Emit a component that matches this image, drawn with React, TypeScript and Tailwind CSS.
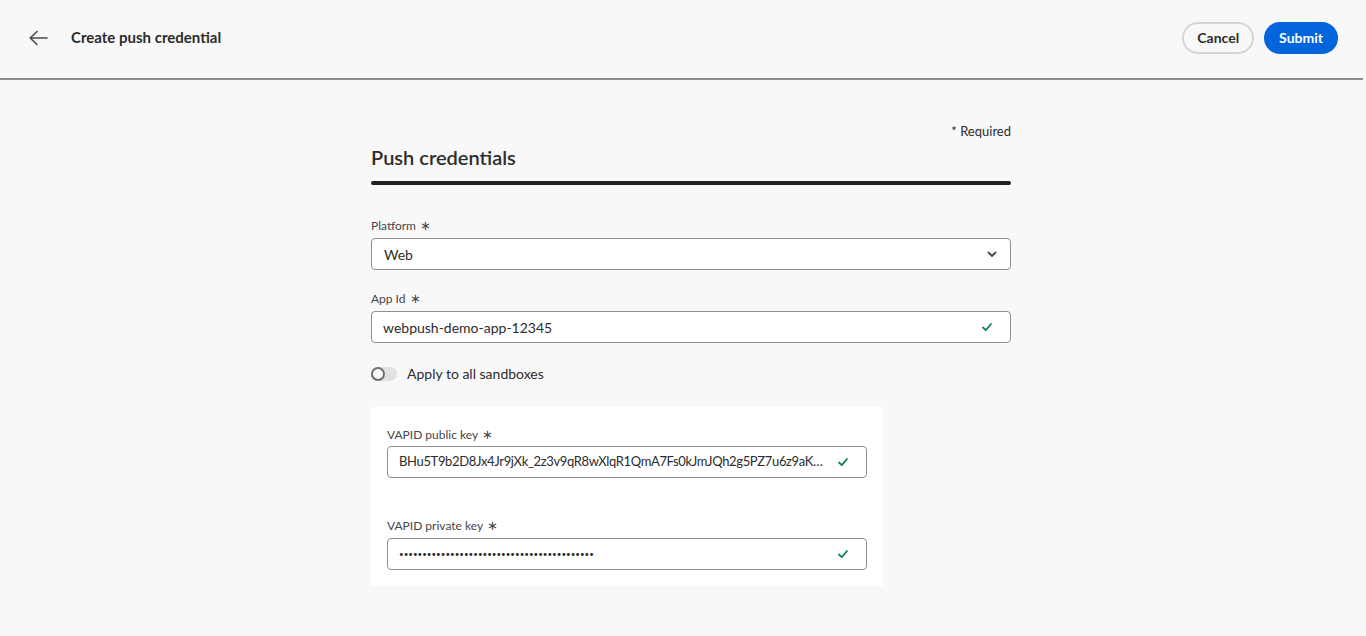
import React from "react";

const font = { fontFamily: "Lato, 'Noto Sans', sans-serif" };

function Check() {
  return (
    <svg width="12" height="12" viewBox="0 0 12 12" className="shrink-0">
      <path d="M2 6.5 L4.8 9.2 L10 3" fill="none" stroke="#12805c" strokeWidth="1.8" strokeLinecap="round" strokeLinejoin="round" />
    </svg>
  );
}

function Label({ children, mb = "mb-[5px]" }: { children: React.ReactNode; mb?: string }) {
  return (
    <div className={`text-[12px] text-[#464646] leading-[15px] ${mb} flex items-center gap-[4px]`}>
      <span>{children}</span>
      <span className="text-[13px] leading-none">∗</span>
    </div>
  );
}

export default function App() {
  return (
    <div className="min-h-[636px] w-full bg-[#f8f8f8] text-[#222]" style={font}>
      <header className="h-[80px] flex items-center justify-between pl-[28px] pr-[25px] border-b-2 border-[#909090] mr-[3px]">
        <div className="flex items-center gap-[23px] pb-[3px]">
          <svg width="20" height="16" viewBox="0 0 20 16">
            <path d="M9 1.5 L2.2 8 L9 14.5 M2.5 8 H19" fill="none" stroke="#4b4b4b" strokeWidth="1.6" strokeLinecap="round" strokeLinejoin="round" />
          </svg>
          <h1 className="text-[15px] font-bold text-[#2c2c2c]">Create push credential</h1>
        </div>
        <div className="flex items-center gap-[10px] pb-[3px]">
          <button className="h-[32px] px-[13px] rounded-full border-2 border-[#d5d5d5] text-[14px] font-bold text-[#2c2c2c]">Cancel</button>
          <button className="h-[32px] px-[15px] rounded-full bg-[#0265dc] text-[14px] font-bold text-white">Submit</button>
        </div>
      </header>

      <main className="flex justify-center pt-[43px]">
        <div className="w-[640px] ml-[16px]">
          <div className="text-right text-[13px] text-[#2c2c2c] leading-[16px]">* Required</div>
          <h2 className="text-[20px] font-semibold text-[#2c2c2c] mt-[7px] leading-[22px]">Push credentials</h2>
          <div className="h-[4px] bg-[#222] rounded-full mt-[13px]" />

          <div className="mt-[33px]">
            <Label>Platform</Label>
            <div className="h-[32px] bg-white border border-[#8f8f8f] rounded-[4px] flex items-center justify-between pl-[12px] pr-[12px]">
              <span className="text-[14px] text-[#2c2c2c]">Web</span>
              <svg width="12" height="12" viewBox="0 0 12 12">
                <path d="M2.5 4.5 L6 8 L9.5 4.5" fill="none" stroke="#4b4b4b" strokeWidth="1.8" strokeLinecap="round" strokeLinejoin="round" />
              </svg>
            </div>
          </div>

          <div className="mt-[21px]">
            <Label>App Id</Label>
            <div className="h-[32px] bg-white border border-[#8f8f8f] rounded-[4px] flex items-center justify-between pl-[11px] pr-[17px]">
              <span className="text-[14px] text-[#2c2c2c]">webpush-demo-app-12345</span>
              <Check />
            </div>
          </div>

          <div className="mt-[20px] flex items-center gap-[10px]">
            <div className="w-[26px] h-[14px] rounded-full bg-[#e1e1e1] relative">
              <div className="absolute left-0 top-0 w-[14px] h-[14px] rounded-full bg-white border-2 border-[#6e6e6e]" />
            </div>
            <span className="text-[14px] text-[#2c2c2c]">Apply to all sandboxes</span>
          </div>

          <div className="mt-[23px] w-[512px] bg-white px-[16px] pt-[20px] pb-[16px]">
            <Label mb="mb-[4px]">VAPID public key</Label>
            <div className="h-[32px] bg-white border border-[#8f8f8f] rounded-[4px] flex items-center justify-between pl-[11px] pr-[17px]">
              <span className="text-[13px] tracking-[-0.35px] text-[#2c2c2c] whitespace-nowrap overflow-hidden pr-[8px]">BHu5T9b2D8Jx4Jr9jXk_2z3v9qR8wXlqR1QmA7Fs0kJmJQh2g5PZ7u6z9aK…</span>
              <Check />
            </div>
            <div className="mt-[40px]">
              <Label mb="mb-[5px]">VAPID private key</Label>
              <div className="h-[32px] bg-white border border-[#8f8f8f] rounded-[4px] flex items-center justify-between pl-[11px] pr-[17px]">
                <span className="text-[8px] text-[#2c2c2c]">••••••••••••••••••••••••••••••••••••••••••</span>
                <Check />
              </div>
            </div>
          </div>
        </div>
      </main>
    </div>
  );
}
